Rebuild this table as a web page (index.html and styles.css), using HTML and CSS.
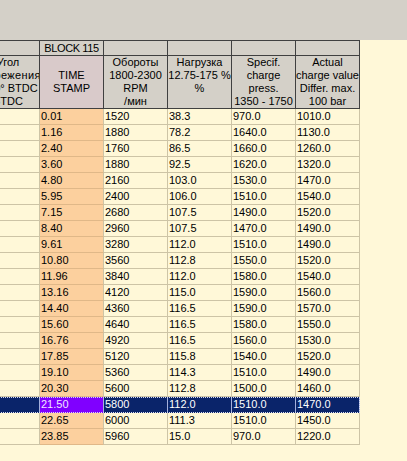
FILE: index.html
```html
<!DOCTYPE html>
<html lang="ru">
<head>
<meta charset="utf-8">
<title>Grid</title>
<link rel="stylesheet" href="styles.css">
</head>
<body>
<div class="top"></div>
<div class="grid">
  <div class="row hdr1">
    <div class="cell"></div>
    <div class="cell"><span class="blk">BLOCK 115</span></div>
    <div class="cell"></div>
    <div class="cell"></div>
    <div class="cell"></div>
    <div class="cell"></div>
  </div>
  <div class="row hdr2">
    <div class="cell"><span>Угол</span><span class="wide">опережения</span><span>0-30° BTDC</span><span>BTDC</span></div>
    <div class="cell pink mid"><span>TIME</span><span>STAMP</span></div>
    <div class="cell"><span>Обороты</span><span>1800-2300</span><span>RPM</span><span>/мин</span></div>
    <div class="cell"><span>Нагрузка</span><span>12.75-175 %</span><span>%</span></div>
    <div class="cell"><span>Specif.</span><span>charge</span><span>press.</span><span>1350 - 1750</span></div>
    <div class="cell"><span>Actual</span><span>charge value</span><span>Differ. max.</span><span>100 bar</span></div>
  </div>
  <div class="row data"><div class="cell"></div><div class="cell ts">0.01</div><div class="cell">1520</div><div class="cell">38.3</div><div class="cell">970.0</div><div class="cell">1010.0</div></div>
  <div class="row data"><div class="cell"></div><div class="cell ts">1.16</div><div class="cell">1880</div><div class="cell">78.2</div><div class="cell">1640.0</div><div class="cell">1130.0</div></div>
  <div class="row data"><div class="cell"></div><div class="cell ts">2.40</div><div class="cell">1760</div><div class="cell">86.5</div><div class="cell">1660.0</div><div class="cell">1260.0</div></div>
  <div class="row data"><div class="cell"></div><div class="cell ts">3.60</div><div class="cell">1880</div><div class="cell">92.5</div><div class="cell">1620.0</div><div class="cell">1320.0</div></div>
  <div class="row data"><div class="cell"></div><div class="cell ts">4.80</div><div class="cell">2160</div><div class="cell">103.0</div><div class="cell">1530.0</div><div class="cell">1470.0</div></div>
  <div class="row data"><div class="cell"></div><div class="cell ts">5.95</div><div class="cell">2400</div><div class="cell">106.0</div><div class="cell">1510.0</div><div class="cell">1540.0</div></div>
  <div class="row data"><div class="cell"></div><div class="cell ts">7.15</div><div class="cell">2680</div><div class="cell">107.5</div><div class="cell">1490.0</div><div class="cell">1520.0</div></div>
  <div class="row data"><div class="cell"></div><div class="cell ts">8.40</div><div class="cell">2960</div><div class="cell">107.5</div><div class="cell">1470.0</div><div class="cell">1490.0</div></div>
  <div class="row data"><div class="cell"></div><div class="cell ts">9.61</div><div class="cell">3280</div><div class="cell">112.0</div><div class="cell">1510.0</div><div class="cell">1490.0</div></div>
  <div class="row data"><div class="cell"></div><div class="cell ts">10.80</div><div class="cell">3560</div><div class="cell">112.8</div><div class="cell">1550.0</div><div class="cell">1520.0</div></div>
  <div class="row data"><div class="cell"></div><div class="cell ts">11.96</div><div class="cell">3840</div><div class="cell">112.0</div><div class="cell">1580.0</div><div class="cell">1540.0</div></div>
  <div class="row data"><div class="cell"></div><div class="cell ts">13.16</div><div class="cell">4120</div><div class="cell">115.0</div><div class="cell">1590.0</div><div class="cell">1560.0</div></div>
  <div class="row data"><div class="cell"></div><div class="cell ts">14.40</div><div class="cell">4360</div><div class="cell">116.5</div><div class="cell">1590.0</div><div class="cell">1570.0</div></div>
  <div class="row data"><div class="cell"></div><div class="cell ts">15.60</div><div class="cell">4640</div><div class="cell">116.5</div><div class="cell">1580.0</div><div class="cell">1550.0</div></div>
  <div class="row data"><div class="cell"></div><div class="cell ts">16.76</div><div class="cell">4920</div><div class="cell">116.5</div><div class="cell">1560.0</div><div class="cell">1530.0</div></div>
  <div class="row data"><div class="cell"></div><div class="cell ts">17.85</div><div class="cell">5120</div><div class="cell">115.8</div><div class="cell">1540.0</div><div class="cell">1520.0</div></div>
  <div class="row data"><div class="cell"></div><div class="cell ts">19.10</div><div class="cell">5360</div><div class="cell">114.3</div><div class="cell">1510.0</div><div class="cell">1490.0</div></div>
  <div class="row data"><div class="cell"></div><div class="cell ts">20.30</div><div class="cell">5600</div><div class="cell">112.8</div><div class="cell">1500.0</div><div class="cell">1460.0</div></div>
  <div class="row data sel"><div class="cell"></div><div class="cell ts">21.50</div><div class="cell">5800</div><div class="cell">112.0</div><div class="cell">1510.0</div><div class="cell">1470.0</div></div>
  <div class="row data"><div class="cell"></div><div class="cell ts">22.65</div><div class="cell">6000</div><div class="cell">111.3</div><div class="cell">1510.0</div><div class="cell">1450.0</div></div>
  <div class="row data"><div class="cell"></div><div class="cell ts">23.85</div><div class="cell">5960</div><div class="cell">15.0</div><div class="cell">970.0</div><div class="cell">1220.0</div></div>
</div>
</body>
</html>
```
FILE: styles.css
```css
* { box-sizing: border-box; }

html, body {
  margin: 0;
  padding: 0;
}

body {
  width: 407px;
  height: 461px;
  overflow: hidden;
  background: #fff8d8;
  font-family: "Liberation Sans", Arial, sans-serif;
  font-size: 11px;
  color: #000;
}

.top {
  height: 40px;
  background: #d4d0c8;
}

.grid {
  margin-left: -23px;
  width: 383px;
}

.row {
  display: grid;
  grid-template-columns: 63px repeat(5, 64px);
}

.hdr1 {
  border-top: 1px solid #404040;
}

.hdr1 .cell,
.hdr2 .cell {
  background: #d4d0c8;
  border-right: 1px solid #404040;
  border-bottom: 1px solid #404040;
}

.hdr1 .cell {
  height: 15px;
  line-height: 14px;
  text-align: center;
  white-space: nowrap;
}

.blk {
  letter-spacing: -0.4px;
}

.hdr2 .cell {
  height: 53px;
  line-height: 13px;
  display: flex;
  flex-direction: column;
  align-items: center;
  justify-content: flex-start;
  white-space: nowrap;
  overflow: hidden;
}

.hdr2 .cell span {
  display: block;
  flex: none;
}

.hdr2 .cell .wide {
  letter-spacing: 0.4px;
}

.hdr2 .mid {
  justify-content: center;
}

.hdr2 .pink {
  background: #d9caca;
}

.data .cell {
  height: 16px;
  line-height: 15px;
  padding-left: 1px;
  white-space: nowrap;
  overflow: hidden;
  border-right: 1px solid #cdc4a6;
  border-bottom: 1px solid #cdc4a6;
}

.data .ts {
  background: #fcd09e;
  border-bottom-color: #e0b888;
}

.sel {
  outline: 1px dotted #d8dcf4;
  outline-offset: -1px;
}

.sel .cell {
  background: #0a246a;
  color: #fff;
  border-right-color: #a4b0dc;
  border-bottom-color: #0a246a;
}

.sel .ts {
  background: #8000ff;
  color: #f0e6ff;
  border-bottom-color: #8000ff;
}
```
